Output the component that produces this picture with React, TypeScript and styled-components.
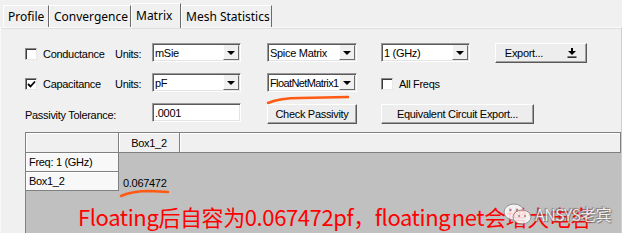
import React from 'react';
import styled, { createGlobalStyle } from 'styled-components';

const GlobalStyle = createGlobalStyle`
  html, body {
    margin: 0;
    padding: 0;
    background: #fff;
  }
`;

const Window = styled.div`
  position: relative;
  width: 622px;
  height: 233px;
  overflow: hidden;
  background: #f0f0f0;
  display: flex;
  flex-direction: column;
  font-family: "Liberation Sans", Arial, sans-serif;
  color: #000;
`;

const TabStrip = styled.div`
  height: 27px;
  display: flex;
  align-items: flex-end;
  padding-left: 3px;
  flex-shrink: 0;
`;

const Tab = styled.div<{ $active?: boolean; $w: number }>`
  box-sizing: border-box;
  width: ${(p) => p.$w}px;
  height: ${(p) => (p.$active ? 25 : 22)}px;
  margin-bottom: ${(p) => (p.$active ? -1 : 0)}px;
  display: flex;
  align-items: ${(p) => (p.$active ? 'flex-start' : 'center')};
  padding: ${(p) => (p.$active ? '3px 0 0 4px' : '0 0 0 4px')};
  font-family: "Noto Sans", sans-serif;
  font-size: 12px;
  background: #f0f0f0;
  border-left: 1px solid #fff;
  border-top: 1px solid #fff;
  border-right: 1px solid #6b6b6b;
  position: relative;
  z-index: ${(p) => (p.$active ? 2 : 1)};
`;

const Panel = styled.div`
  flex: 1;
  display: flex;
  flex-direction: column;
  border-top: 1px solid #fbfbfb;
  box-shadow: inset 0 1px 0 #dedede;
  border-left: 1px solid #fafafa;
  border-right: 1px solid #cfcfcf;
  min-height: 0;
`;

const Form = styled.div`
  display: grid;
  grid-template-columns: 90px 37px 89px 26px 90px 24px 89px 25px 92px;
  grid-template-rows: 20px 20px 21px;
  row-gap: 10px;
  padding: 15px 0 0 24px;
  font-size: 11px;
  letter-spacing: -0.3px;
  align-items: center;
`;

const CheckLabel = styled.label<{ $col: number }>`
  grid-column: ${(p) => p.$col};
  display: flex;
  align-items: center;
  gap: 6px;
  white-space: nowrap;
  padding-top: 2px;
`;

const Box = styled.span`
  box-sizing: border-box;
  width: 12px;
  height: 12px;
  background: #fff;
  border: 1px solid;
  border-color: #8a8a8a #e8e8e8 #e8e8e8 #8a8a8a;
  box-shadow: inset 1px 1px 0 #3c3c3c;
  display: flex;
  align-items: center;
  justify-content: center;
`;

const Label = styled.span<{ $col: string }>`
  grid-column: ${(p) => p.$col};
  white-space: nowrap;
  padding-top: 2px;
`;

const Field = styled.div<{ $col: number }>`
  grid-column: ${(p) => p.$col};
  box-sizing: border-box;
  height: 19px;
  align-self: start;
  background: #fff;
  border: 1px solid;
  border-color: #9a9a9a #fff #fff #9a9a9a;
  box-shadow: inset 1px 1px 0 #5a5a5a, inset -1px -1px 0 #e3e3e3;
  display: flex;
  align-items: center;
  padding-left: 2px;
  white-space: nowrap;
  overflow: hidden;
`;

const FieldText = styled.span<{ $tight?: boolean }>`
  flex: 1;
  min-width: 0;
  overflow: hidden;
  letter-spacing: ${(p) => (p.$tight ? '-0.6px' : 'inherit')};
`;

const ArrowBtn = styled.span`
  box-sizing: border-box;
  width: 16px;
  height: 15px;
  margin-right: 1px;
  background: #f0f0f0;
  border: 1px solid;
  border-color: #f0f0f0 #6b6b6b #6b6b6b #fff;
  display: flex;
  align-items: center;
  justify-content: center;
  flex-shrink: 0;
  &::after {
    content: "";
    border-left: 4px solid transparent;
    border-right: 4px solid transparent;
    border-top: 4px solid #000;
  }
`;

const Button = styled.div<{ $col: string; $w?: number }>`
  grid-column: ${(p) => p.$col};
  box-sizing: border-box;
  width: ${(p) => (p.$w ? `${p.$w}px` : 'auto')};
  height: 20px;
  background: #ededed;
  border: 1px solid;
  border-color: #fff #595959 #595959 #fff;
  box-shadow: inset -1px -1px 0 #a0a0a0;
  display: flex;
  align-items: center;
  justify-content: center;
  gap: 24px;
  white-space: nowrap;
`;

const Table = styled.div`
  margin: 8px 0 0 24px;
  flex: 1;
  display: grid;
  grid-template-columns: 93px 61px 1fr;
  grid-template-rows: 20px 19px 19px 1fr;
  background: #c0c0c0;
  border-top: 1px solid #808080;
  border-left: 1px solid #808080;
  font-size: 11px;
  letter-spacing: -0.3px;
`;

const HeadCell = styled.div<{ $center?: boolean; $light?: boolean }>`
  box-sizing: border-box;
  background: ${(p) => (p.$light ? '#f8f8f8' : '#f0f0f0')};
  border-right: 1px solid #808080;
  border-bottom: 1px solid #808080;
  box-shadow: inset 1px 1px 0 #fff;
  display: flex;
  align-items: center;
  justify-content: ${(p) => (p.$center ? 'center' : 'flex-start')};
  padding-left: ${(p) => (p.$center ? 0 : 3)}px;
  white-space: nowrap;
`;

const ValueCell = styled.div`
  display: flex;
  align-items: center;
  padding-left: 4px;
  padding-top: 2px;
`;

const Note = styled.div`
  position: absolute;
  left: 78px;
  top: 201px;
  font-family: "Noto Sans CJK SC", sans-serif;
  font-size: 22px;
  line-height: 30px;
  letter-spacing: -0.4px;
  word-spacing: -3px;
  color: #ff0000;
  white-space: nowrap;
`;

const Mark = styled.svg`
  position: absolute;
  left: 0;
  top: 0;
  pointer-events: none;
`;

const Watermark = styled.div`
  position: absolute;
  left: 503px;
  top: 202px;
  display: flex;
  align-items: center;
  gap: 2px;
  opacity: 0.8;
  font-family: "Noto Sans CJK SC", sans-serif;
  font-size: 16px;
  color: #fff;
  text-shadow: 0 0 1px #555, 1px 1px 1px #666, -1px -1px 1px #777;
  white-space: nowrap;
  letter-spacing: -0.6px;
`;

const Check = () => (
  <svg width="9" height="9" viewBox="0 0 9 9">
    <path d="M1 4 L3.5 6.5 L8 1.5" fill="none" stroke="#000" strokeWidth="1.8" />
  </svg>
);

const Dropdown = ({ col, text, tight }: { col: number; text: string; tight?: boolean }) => (
  <Field $col={col}>
    <FieldText $tight={tight}>{text}</FieldText>
    <ArrowBtn />
  </Field>
);

const ExportIcon = () => (
  <svg width="10" height="10" viewBox="0 0 10 10">
    <path d="M4 0 H6 V3 H9 L5 7 L1 3 H4 Z" fill="#000" />
    <rect x="0.5" y="8.5" width="9" height="1.3" fill="#000" />
  </svg>
);

const WeChat = () => (
  <svg width="30" height="24" viewBox="0 0 30 24">
    <ellipse cx="11" cy="10" rx="10" ry="8" fill="#fff" stroke="#888" strokeWidth="1" />
    <ellipse cx="19" cy="15" rx="9" ry="7" fill="#fff" stroke="#888" strokeWidth="1" />
    <circle cx="7.5" cy="8" r="1.3" fill="#999" />
    <circle cx="14" cy="8" r="1.3" fill="#999" />
    <circle cx="16" cy="14" r="1.1" fill="#999" />
    <circle cx="22" cy="14" r="1.1" fill="#999" />
  </svg>
);

export default function App() {
  return (
    <>
      <GlobalStyle />
      <Window>
        <TabStrip>
          <Tab $w={46}>Profile</Tab>
          <Tab $w={82}>Convergence</Tab>
          <Tab $w={50} $active>Matrix</Tab>
          <Tab $w={91}>Mesh Statistics</Tab>
        </TabStrip>
        <Panel>
          <Form>
            <CheckLabel $col={1}>
              <Box />
              Conductance
            </CheckLabel>
            <Label $col="2">Units:</Label>
            <Dropdown col={3} text="mSie" />
            <Dropdown col={5} text="Spice Matrix" />
            <Dropdown col={7} text="1 (GHz)" />
            <Button $col="9">
              <span>Export...</span>
              <ExportIcon />
            </Button>

            <CheckLabel $col={1}>
              <Box>
                <Check />
              </Box>
              Capacitance
            </CheckLabel>
            <Label $col="2">Units:</Label>
            <Dropdown col={3} text="pF" />
            <Dropdown col={5} text="FloatNetMatrix1" tight />
            <CheckLabel $col={7}>
              <Box />
              All Freqs
            </CheckLabel>

            <Label $col="1 / 3">Passivity Tolerance:</Label>
            <Field $col={3}>.0001</Field>
            <Button $col="5">Check Passivity</Button>
            <Button $col="7 / 10" $w={153}>
              Equivalent Circuit Export...
            </Button>
          </Form>
          <Table>
            <HeadCell />
            <HeadCell $center>Box1_2</HeadCell>
            <HeadCell />
            <HeadCell $light>Freq: 1 (GHz)</HeadCell>
            <div />
            <div />
            <HeadCell $light>Box1_2</HeadCell>
            <ValueCell>0.067472</ValueCell>
          </Table>
        </Panel>
        <Mark width="622" height="233">
          <path d="M268 103 Q280 98 300 98 L348 97" fill="none" stroke="#ff5a14" strokeWidth="2.5" strokeLinecap="round" />
          <path d="M121 196 Q132 191 150 191 L168 192" fill="none" stroke="#ff5a14" strokeWidth="2.5" strokeLinecap="round" />
        </Mark>
        <Note>Floating后自容为0.067472pf，floating net会增大电容</Note>
        <Watermark>
          <WeChat />
          <span>ANSYS老宾</span>
        </Watermark>
      </Window>
    </>
  );
}
